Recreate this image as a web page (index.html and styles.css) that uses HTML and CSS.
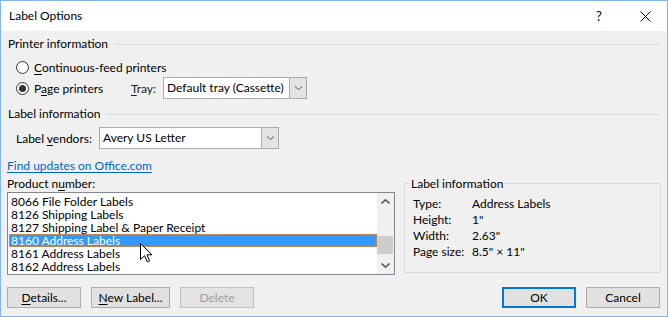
FILE: index.html
```html
<!DOCTYPE html>
<html>
<head>
<meta charset="utf-8">
<link rel="stylesheet" href="styles.css">
</head>
<body>
<div class="window">
  <div class="titlebar">
    <span class="title">Label Options</span>
    <span class="help">?</span>
    <span class="close"><svg width="11" height="11" viewBox="0 0 11 11"><path d="M0.5 0.5 L10.5 10.5 M10.5 0.5 L0.5 10.5" stroke="#000" stroke-width="1" fill="none"/></svg></span>
  </div>
  <div class="content">
    <div class="group-head"><span class="gh-text">Printer information</span><span class="rule"></span></div>
    <div class="radio-row r1"><span class="radio"></span><span class="rlabel"><u>C</u>ontinuous-feed printers</span></div>
    <div class="radio-row r2"><span class="radio checked"></span><span class="rlabel page">P<u>a</u>ge printers</span><span class="tray-label"><u>T</u>ray:</span>
      <div class="combo tray"><span class="combo-text">Default tray (Cassette)</span><span class="combo-btn"><svg width="7" height="4" viewBox="0 0 7 4"><path d="M0 0.5 L3.5 3.5 L7 0.5" stroke="#555" fill="none"/></svg></span></div>
    </div>
    <div class="group-head g2"><span class="gh-text">Label information</span><span class="rule"></span></div>
    <div class="vendor-row"><span class="vendor-label">Label <u>v</u>endors:</span>
      <div class="combo vendor"><span class="combo-text">Avery US Letter</span><span class="combo-btn"><svg width="7" height="4" viewBox="0 0 7 4"><path d="M0 0.5 L3.5 3.5 L7 0.5" stroke="#555" fill="none"/></svg></span></div>
    </div>
    <div class="lower">
      <div class="left-col">
        <a class="link" href="#">Find updates on Office.com</a>
        <div class="pn-label">Product n<u>u</u>mber:</div>
        <div class="listbox">
          <div class="items">
            <div class="item">8066 File Folder Labels</div>
            <div class="item">8126 Shipping Labels</div>
            <div class="item">8127 Shipping Label &amp; Paper Receipt</div>
            <div class="item selected">8160 Address Labels</div>
            <div class="item">8161 Address Labels</div>
            <div class="item">8162 Address Labels</div>
          </div>
          <div class="scrollbar">
            <span class="sb-arrow"><svg width="9" height="5" viewBox="0 0 9 5"><path d="M0.5 4.5 L4.5 0.8 L8.5 4.5" stroke="#606060" stroke-width="1.6" fill="none"/></svg></span>
            <span class="sb-track"><span class="sb-thumb"></span></span>
            <span class="sb-arrow"><svg width="9" height="5" viewBox="0 0 9 5"><path d="M0.5 0.5 L4.5 4.2 L8.5 0.5" stroke="#606060" stroke-width="1.6" fill="none"/></svg></span>
          </div>
        </div>
      </div>
      <fieldset class="info">
        <legend>Label information</legend>
        <div class="info-row"><span class="k">Type:</span><span class="v">Address Labels</span></div>
        <div class="info-row"><span class="k">Height:</span><span class="v">1"</span></div>
        <div class="info-row"><span class="k">Width:</span><span class="v">2.63"</span></div>
        <div class="info-row"><span class="k">Page size:</span><span class="v">8.5" × 11"</span></div>
      </fieldset>
    </div>
    <div class="buttons">
      <div class="btn-group">
        <button class="btn"><u>D</u>etails...</button>
        <button class="btn wide"><u>N</u>ew Label...</button>
        <button class="btn disabled">Delete</button>
      </div>
      <div class="btn-group">
        <button class="btn default">OK</button>
        <button class="btn">Cancel</button>
      </div>
    </div>
  </div>
  <svg class="cursor" width="13" height="20" viewBox="0 0 13 20"><path d="M0.5 0.5 L0.5 16.5 L4.5 12.7 L7.2 18.8 L9.6 17.8 L7 11.8 L12 11.8 Z" fill="#fff" stroke="#000" stroke-width="1" stroke-linejoin="miter"/></svg>
</div>
</body>
</html>
```
FILE: styles.css
```css
* { box-sizing: border-box; }
html, body { margin: 0; padding: 0; }
body {
  font-family: "Lato", "Noto Sans", sans-serif;
  font-size: 12px;
  color: #000;
  background: #f0f0f0;
}
.window {
  position: relative;
  width: 668px;
  height: 317px;
  border: 1px solid #85b5e6;
  background: #f0f0f0;
  overflow: hidden;
}
.titlebar {
  height: 30px;
  background: #fff;
  display: flex;
  align-items: center;
}
.title { padding-left: 8px; flex: 1; line-height: 16px; }
.help { width: 48px; text-align: center; font-size: 13px; }
.close { width: 44px; display: flex; justify-content: center; }
.close svg { display: block; }
.content { padding: 0 6px; }
u { text-decoration: underline; text-underline-offset: 2px; }

.group-head {
  margin-top: 6px;
  height: 14px;
  display: flex;
  align-items: center;
  padding-left: 1px;
}
.group-head.g2 { margin-top: 8px; }
.gh-text { line-height: 14px; }
.rule { flex: 1; height: 1px; background: #dcdcdc; margin-left: 6px; }

.radio-row { display: flex; align-items: center; padding-left: 9px; }
.radio-row.r1 { margin-top: 6px; height: 20px; }
.radio-row.r2 { height: 22px; }
.radio {
  width: 13px; height: 13px;
  border: 1px solid #333;
  border-radius: 50%;
  background: #fff;
  display: flex; align-items: center; justify-content: center;
}
.radio.checked::after {
  content: "";
  width: 7px; height: 7px;
  border-radius: 50%;
  background: #333;
}
.rlabel { margin-left: 5px; }
.rlabel.page { width: 97px; }
.tray-label { width: 32px; color: #222; }

.combo {
  display: flex;
  height: 22px;
  border: 1px solid #acacac;
  background: #fff;
}
.combo.tray { width: 144px; }
.combo.vendor { width: 180px; }
.combo-text { flex: 1; padding-left: 3px; line-height: 20px; white-space: nowrap; overflow: hidden; }
.combo-btn {
  width: 17px;
  background: #e3e3e3;
  border-left: 1px solid #acacac;
  display: flex; align-items: center; justify-content: center;
}
.combo-btn svg { display: block; }

.vendor-row { display: flex; align-items: center; margin-top: 6px; padding-left: 9px; }
.vendor-label { width: 83px; }

.lower { display: flex; align-items: flex-start; }
.left-col { width: 388px; display: flex; flex-direction: column; }
.link {
  margin-top: 9px;
  line-height: 16px;
  color: #0066cc;
  text-decoration: underline;
  text-underline-offset: 2px;
  align-self: flex-start;
}
.pn-label { margin-top: 2px; line-height: 16px; }
.listbox {
  height: 83px;
  border: 1px solid #828790;
  background: #fff;
  display: flex;
}
.items { flex: 1; padding: 2px 0 0 1px; }
.item {
  height: 13px;
  line-height: 13px;
  padding-left: 2px;
  white-space: nowrap;
  font-size: 12px;
}
.item.selected {
  background: #3399ff;
  color: #fff;
  outline: 1px dotted #c89060;
  outline-offset: -1px;
}
.scrollbar {
  width: 17px;
  background: #f0f0f0;
  display: flex;
  flex-direction: column;
}
.sb-arrow { height: 17px; display: flex; align-items: center; justify-content: center; }
.sb-arrow svg { display: block; }
.sb-track { flex: 1; position: relative; }
.sb-thumb {
  position: absolute;
  left: 0; right: 1px;
  top: 26px; height: 18px;
  background: #cdcdcd;
}

.info {
  margin: 27px 0 0 9px;
  width: 257px;
  border: 1px solid #dcdcdc;
  padding: 5px 5px 12px 5px;
  min-width: 0;
}
.info legend { padding: 0 1px; line-height: 15px; }
.info-row { display: flex; line-height: 16px; padding-left: 3px; }
.k { width: 59px; }

.buttons {
  margin-top: 12px;
  display: flex;
  justify-content: space-between;
  padding-right: 1px;
}
.btn-group { display: flex; gap: 10px; }
.btn {
  font-family: inherit;
  font-size: 12px;
  width: 74px;
  height: 21px;
  padding: 0;
  margin: 0;
  border: 1px solid #adadad;
  background: #e1e1e1;
  color: #000;
  line-height: 18px;
}
.btn.wide { width: 79px; }
.btn.disabled { color: #a0a0a0; border-color: #bfbfbf; background: #e3e3e3; }
.btn.default { border: 2px solid #0078d7; }

.cursor { position: absolute; left: 139px; top: 242px; display: block; }
```
